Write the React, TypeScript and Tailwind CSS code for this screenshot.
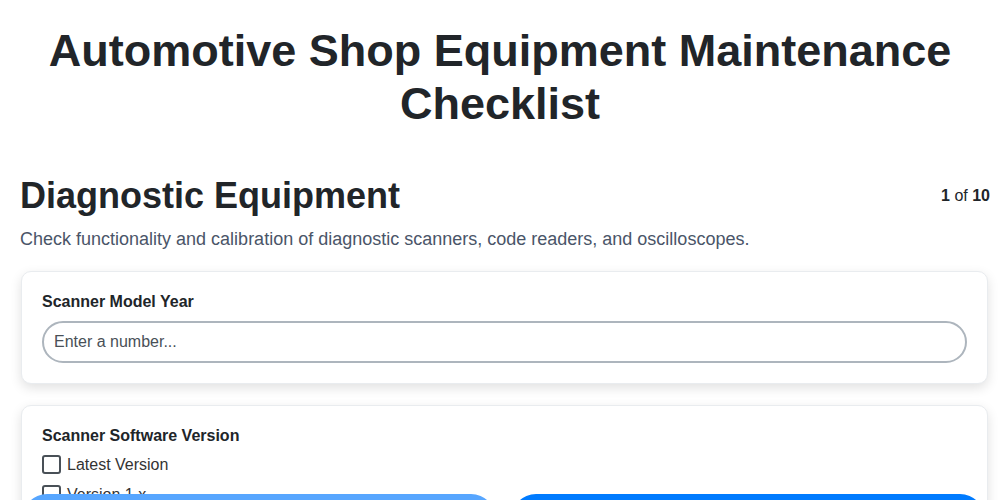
import React from "react";

export default function App() {
  return (
    <div className="min-h-screen bg-white text-[#212529]" style={{ fontFamily: '"Liberation Sans", Arial, sans-serif' }}>
      <h1 className="text-center text-[45px] font-bold leading-[53px] pt-[24px] px-[40px]">
        Automotive Shop Equipment Maintenance Checklist
      </h1>
      <div className="pl-[20px] pr-[10px] pt-[44px]">
        <div className="flex items-center justify-between">
          <h2 className="text-[36px] font-bold leading-[44px]">Diagnostic Equipment</h2>
          <div className="text-[16px]">
            <span className="font-bold">1</span> of <span className="font-bold">10</span>
          </div>
        </div>
        <p className="text-[18px] text-[#4a5568] mt-[8px] leading-[26px]">
          Check functionality and calibration of diagnostic scanners, code readers, and oscilloscopes.
        </p>
        <div className="pr-[2px] pl-[1px] mt-[19px] flex flex-col gap-[21px]">
          <div className="rounded-[10px] border border-[#e9ecef] bg-white shadow-[0_4px_12px_rgba(0,0,0,0.12)] px-[20px] pt-[20px] pb-[20px]">
            <label className="block text-[16px] font-bold leading-[19px]">Scanner Model Year</label>
            <input
              type="text"
              placeholder="Enter a number..."
              className="mt-[10px] w-full h-[42px] rounded-full border-2 border-[#adb5bd] px-[10px] text-[16px] text-[#495057] placeholder:text-[#495057] outline-none"
            />
          </div>
          <div className="rounded-[10px] border border-[#e9ecef] bg-white shadow-[0_4px_12px_rgba(0,0,0,0.12)] px-[20px] pt-[20px] pb-[20px]">
            <label className="block text-[16px] font-bold leading-[19px]">Scanner Software Version</label>
            <div className="mt-[10px] flex flex-col gap-[11px]">
              {["Latest Version", "Version 1.x", "Version 2.x"].map((t) => (
                <label key={t} className="flex items-center gap-[6px] text-[16px] text-[#333] leading-[19px]">
                  <span className="inline-block w-[19px] h-[19px] rounded-[3px] border-2 border-[#495057] bg-white" />
                  {t}
                </label>
              ))}
            </div>
          </div>
        </div>
      </div>
      <div className="fixed left-0 right-0 top-[494px] flex gap-[15px] pl-[22px] pr-[15px]">
        <button className="flex-1 h-[50px] rounded-full bg-[#57a6ff] text-white text-[16px] font-bold">Previous</button>
        <button className="flex-1 h-[50px] rounded-full bg-[#007bff] text-white text-[16px] font-bold">Next</button>
      </div>
    </div>
  );
}
